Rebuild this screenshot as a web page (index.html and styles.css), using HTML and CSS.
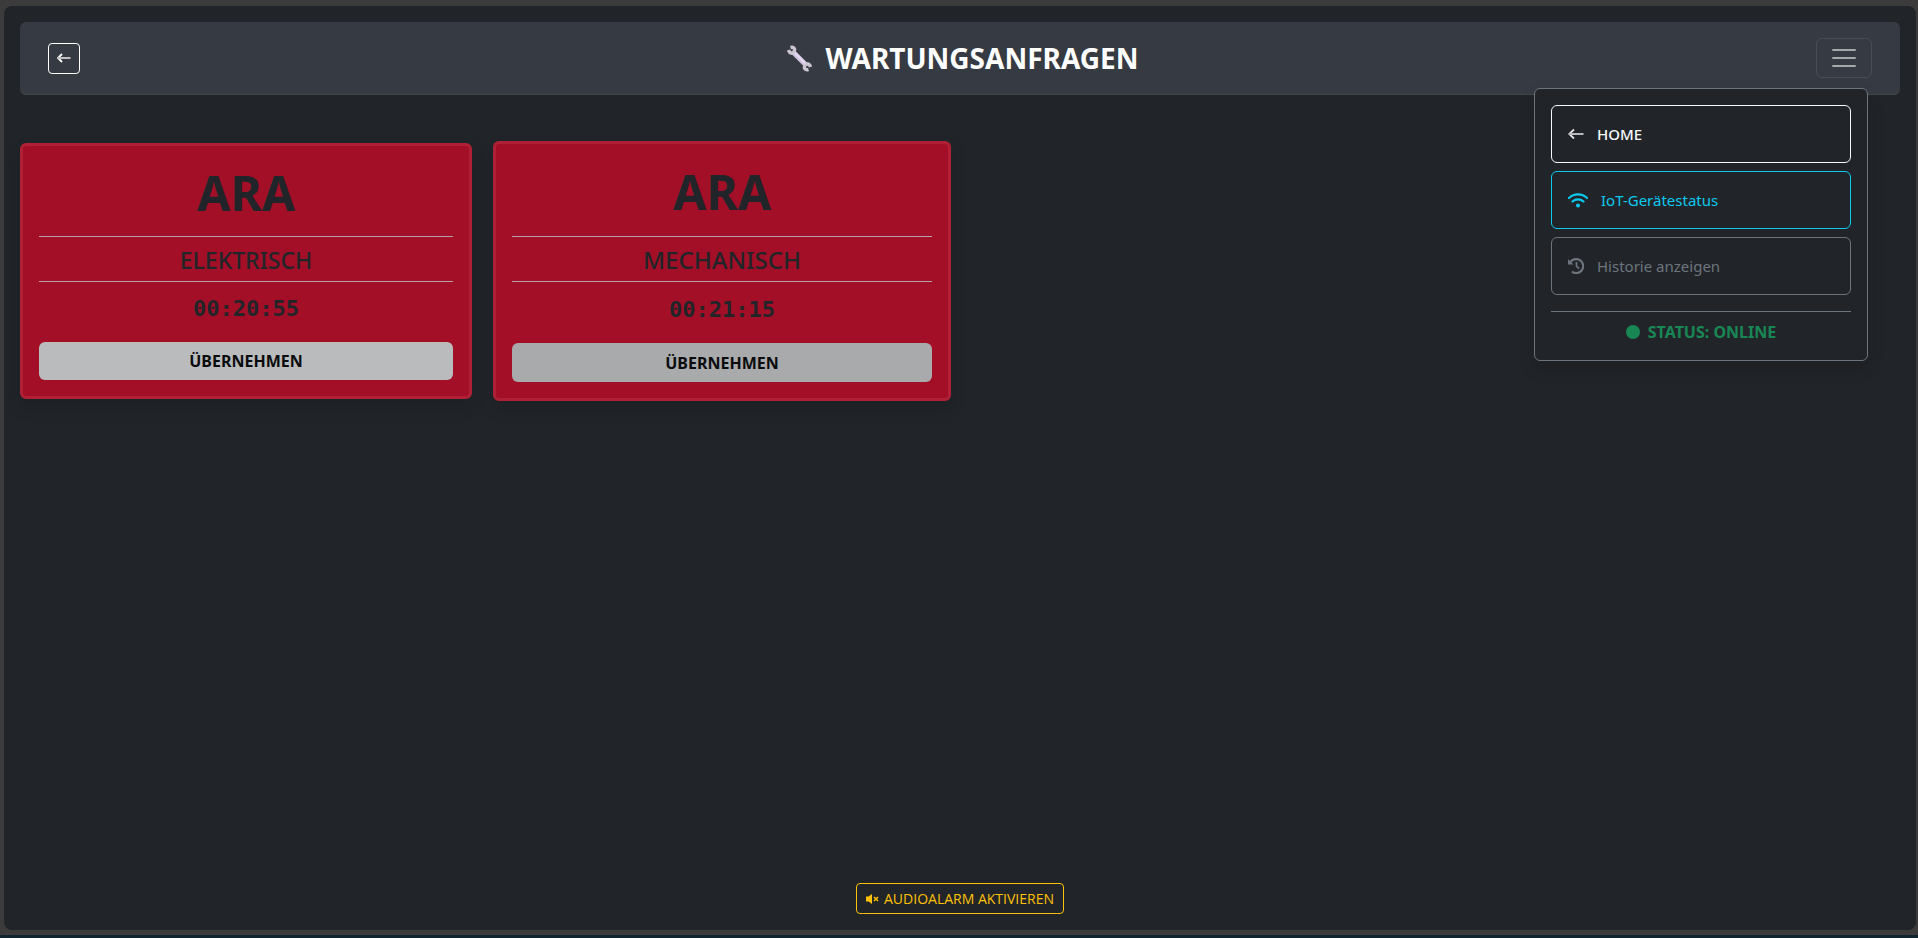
FILE: index.html
```html
<!DOCTYPE html>
<html lang="de">
<head>
    <meta charset="UTF-8">
    <meta name="viewport" content="width=device-width, initial-scale=1">
    <title>Wartungsanfragen</title>
    <link rel="stylesheet" href="styles.css">
</head>
<body>
    <div class="frame">
        <header class="topbar">
            <a href="#" class="back-btn" aria-label="Zurück">
                <svg width="14" height="10" viewBox="0 0 14 10"><path d="M5 1 1 5l4 4" fill="none" stroke="#fff" stroke-width="1.8"/><path d="M1 5h12.500" stroke="#bfbfc3" stroke-width="2"/></svg>
            </a>
            <h1 class="title">
                <svg width="27" height="27" viewBox="0 0 27 27">
                    <path d="M7 7l13 13" stroke="#d3c6e2" stroke-width="5"/>
                    <path d="M8 7l12 12" stroke="#eadff7" stroke-width="1.500"/>
                    <path d="M4.500 2.500C8 1.500 9.500 4 8 6.500S3.500 8.500 2.500 5" fill="none" stroke="#cbc5d0" stroke-width="3.400"/>
                    <path d="M22.500 24.500C19 25.500 17.500 23 19 20.500S23.500 18.500 24.500 22" fill="none" stroke="#cbc5d0" stroke-width="3.400"/>
                </svg>
                <span>WARTUNGSANFRAGEN</span>
            </h1>
            <div class="menu">
                <button type="button" class="toggler" aria-label="Menü" aria-expanded="true">
                    <svg width="30" height="30" viewBox="0 0 30 30"><path d="M4 7h22M4 15h22M4 23h22" stroke="currentColor" stroke-width="2" stroke-linecap="round"/></svg>
                </button>
                <nav class="dropdown">
                    <a href="#" class="menu-item home">
                        <svg width="16" height="12" viewBox="0 0 16 12"><path d="M6 1.500 1.200 6 6 10.500" fill="none" stroke="#e4e4e6" stroke-width="1.800"/><path d="M1 6h14.500" stroke="#b9babc" stroke-width="2"/></svg>
                        HOME
                    </a>
                    <a href="#" class="menu-item iot">
                        <svg width="20" height="16" viewBox="0 0 20 16"><path d="M1 6a13 13 0 0 1 18 0M4.500 9.500a8 8 0 0 1 11 0" fill="none" stroke="currentColor" stroke-width="2.200" stroke-linecap="round"/><circle cx="10" cy="13.500" r="2" fill="currentColor"/></svg>
                        IoT-Gerätestatus
                    </a>
                    <a href="#" class="menu-item history">
                        <svg width="16" height="16" viewBox="0 0 16 16"><path d="M2.500 4A7 7 0 1 1 4 13.700" fill="none" stroke="currentColor" stroke-width="2.200"/><path d="M0 1v5.500h5.500z" fill="currentColor"/><path d="M8.500 4v4.200l2.500 2.500" fill="none" stroke="currentColor" stroke-width="1.800"/></svg>
                        Historie anzeigen
                    </a>
                    <div class="online">
                        <span class="dot"></span>
                        <span>STATUS: ONLINE</span>
                    </div>
                </nav>
            </div>
        </header>

        <main class="cards">
            <section class="card">
                <h2>ARA</h2>
                <p class="kind">ELEKTRISCH</p>
                <p class="timer">00:20:55</p>
                <button type="button" class="take-btn">ÜBERNEHMEN</button>
            </section>
            <section class="card pulse">
                <h2>ARA</h2>
                <p class="kind">MECHANISCH</p>
                <p class="timer">00:21:15</p>
                <button type="button" class="take-btn">ÜBERNEHMEN</button>
            </section>
        </main>

        <footer class="bottom">
            <button type="button" class="audio-btn">
                <svg width="13" height="10" viewBox="0 0 13 10"><path d="M0 2.500h2.500L6 0v10L2.500 7.500H0z" fill="currentColor"/><path d="M8 3l4 4M12 3l-4 4" stroke="currentColor" stroke-width="1.500"/></svg>
                AUDIOALARM AKTIVIEREN
            </button>
        </footer>
    </div>
</body>
</html>
```
FILE: styles.css
```css
* {
    box-sizing: border-box;
}
body {
    margin: 0;
    min-height: 100vh;
    padding: 6px 2px 5px 4px;
    display: flex;
    background: #3b3b3b;
    border-bottom: 3px solid #10242f;
    font-family: "Noto Sans", "Open Sans", sans-serif;
    font-size: 16px;
    line-height: 24px;
    color: #212529;
}
h1, h2, p {
    margin: 0;
}
a {
    text-decoration: none;
}
button {
    font-family: inherit;
    cursor: pointer;
}
svg {
    flex: none;
}
.frame {
    flex: 1;
    display: flex;
    flex-direction: column;
    padding: 16px;
    background: #212529;
    border-radius: 8px;
}

/* header */
.topbar {
    display: grid;
    grid-template-columns: 1fr auto 1fr;
    align-items: center;
    padding: 16px 28px;
    background: #363a42;
    border-bottom: 1px solid #45484a;
    border-radius: 6px;
}
.back-btn {
    width: 32px;
    height: 31px;
    display: flex;
    align-items: center;
    justify-content: center;
    border: 1px solid #fff;
    border-radius: 4px;
}
.title {
    display: flex;
    align-items: center;
    gap: 13px;
    padding-left: 4px;
    font-size: 28px;
    line-height: 34px;
    color: #fff;
}
.menu {
    position: relative;
    justify-self: end;
}
.toggler {
    display: block;
    padding: 4px 12px;
    background: none;
    border: 1px solid #494d52;
    border-radius: 6px;
    color: #a5a7aa;
}
.toggler svg {
    display: block;
}

/* menu */
.dropdown {
    position: absolute;
    top: 50px;
    right: 4px;
    z-index: 10;
    width: 334px;
    padding: 16px;
    display: flex;
    flex-direction: column;
    gap: 8px;
    background: #212529;
    border: 1px solid #6c757d;
    border-radius: 6px;
    box-shadow: 0 8px 16px rgba(0, 0, 0, 0.15);
}
.menu-item {
    display: flex;
    align-items: center;
    gap: 13px;
    padding: 16px;
    border: 1px solid;
    border-radius: 6px;
    font-size: 15px;
}
.home {
    font-weight: 500;
    color: #f8f9fa;
}
.iot {
    color: #0dcaf0;
}
.history {
    color: #6c757d;
}
.online {
    display: flex;
    align-items: center;
    justify-content: center;
    gap: 8px;
    margin-top: 8px;
    padding-top: 8px;
    border-top: 1px solid #6c757d;
    font-weight: bold;
    color: #198754;
}
.dot {
    width: 14px;
    height: 14px;
    border-radius: 50%;
    background: #198754;
}

/* cards */
.cards {
    flex: 1;
    display: grid;
    grid-template-columns: repeat(4, 1fr);
    align-items: start;
    gap: 24px;
    padding-top: 48px;
}
.card {
    padding: 16px;
    background: #a20f27;
    border: 3px solid #b02034;
    border-radius: 6px;
    box-shadow: 0 8px 16px rgba(0, 0, 0, 0.15);
    text-align: center;
}
.card h2 {
    padding: 2px 0 14px;
    font-size: 48px;
    line-height: 58px;
}
.kind {
    padding: 9px 0 7px;
    border-top: 1px solid #b5a2a8;
    border-bottom: 1px solid #b5a2a8;
    font-size: 23px;
    font-weight: 500;
    line-height: 28px;
}
.timer {
    padding: 9px 0 15px;
    font-family: "DejaVu Sans Mono", monospace;
    font-size: 22px;
    font-weight: bold;
    line-height: 36px;
}
.take-btn {
    display: block;
    width: 100%;
    height: 38px;
    border: 0;
    border-radius: 6px;
    background: #b9bbbc;
    font-size: 16px;
    font-weight: bold;
    color: #0b0c0e;
}

/* the pulsing card is a little larger than its cell */
.pulse {
    margin: -2px -3px;
}
.pulse h2 {
    padding: 3px 0 15px;
}
.pulse .kind {
    font-size: 24px;
}
.pulse .timer {
    line-height: 37px;
}
.pulse .take-btn {
    height: 39px;
    background: #a9aaab;
}

/* audio */
.bottom {
    display: flex;
    justify-content: center;
}
.audio-btn {
    display: flex;
    align-items: center;
    gap: 5px;
    padding: 4px 9px;
    background: none;
    border: 1px solid #ffc107;
    border-radius: 4px;
    font-family: "Open Sans", sans-serif;
    font-size: 14px;
    line-height: 21px;
    color: #ffc107;
}
```
